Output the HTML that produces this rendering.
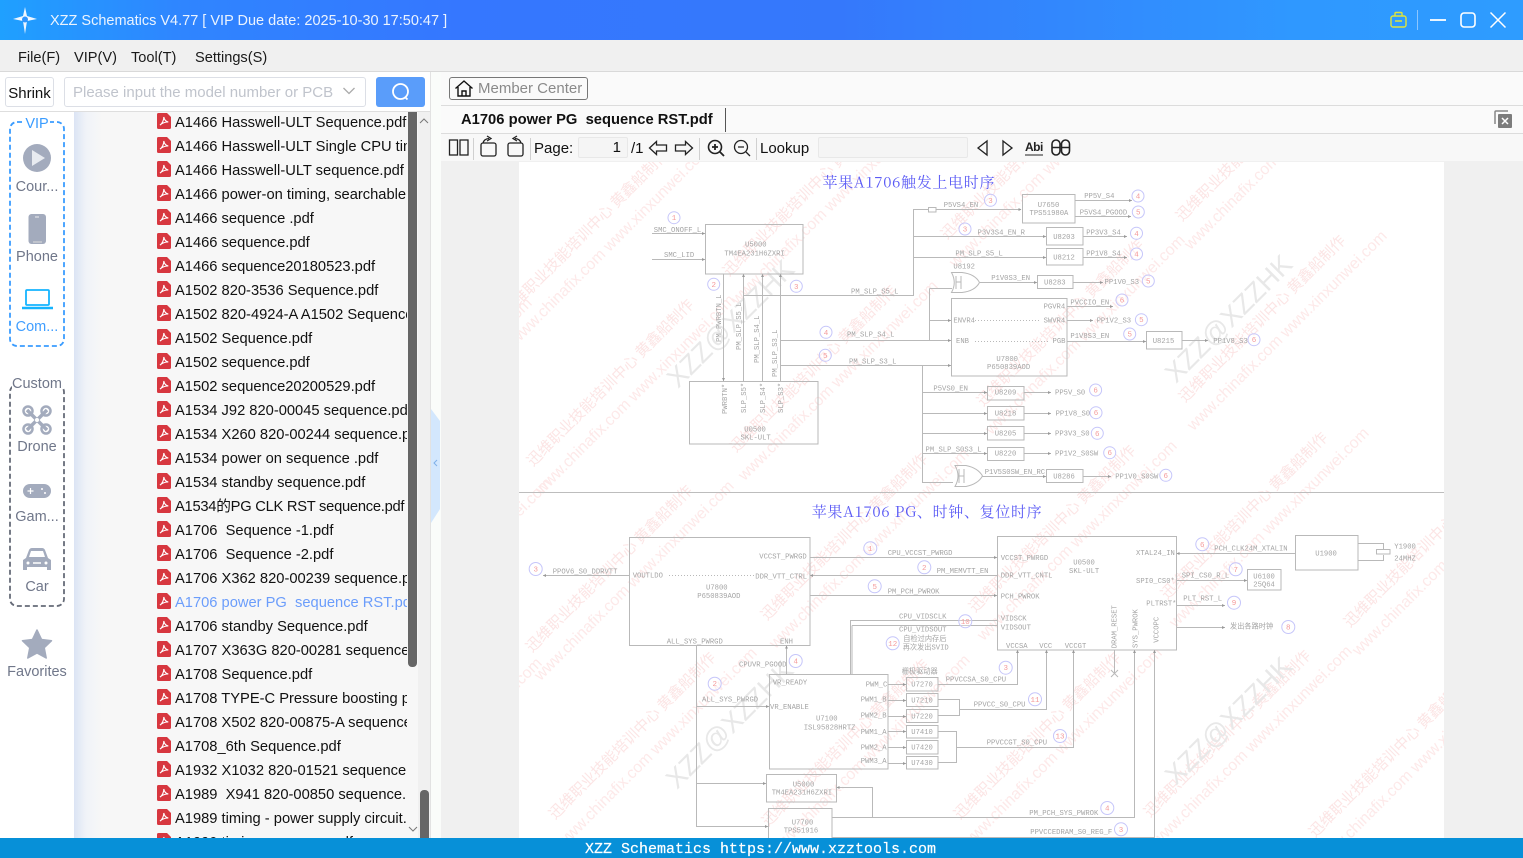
<!DOCTYPE html>
<html><head><meta charset="utf-8"><title>XZZ Schematics</title>
<style>
html,body{margin:0;padding:0;width:1523px;height:858px;overflow:hidden;background:#fff;font-family:"Liberation Sans","Noto Sans CJK SC",sans-serif}
.a{position:absolute}
#title{left:0;top:0;width:1523px;height:40px;background:linear-gradient(90deg,#1fa0ff 0,#2f85ff 12%,#3577ff 30%,#3578fb 55%,#2f98ff 85%,#2e9cff 100%)}
#menu{left:0;top:40px;width:1523px;height:31px;background:#f0f0f0;border-bottom:1px solid #d9d9d9}
#menu span{position:absolute;top:9px;font-size:14.6px;line-height:18px;color:#1a1a1a}
.b{box-sizing:border-box;background:#fff;border:1px solid #dcdfe6;border-radius:3px}
.lab{position:absolute;width:74px;left:0;text-align:center;font-size:14.5px;line-height:18px;color:#70778a}
#list{left:74px;top:112px;width:344px;height:726px;background:linear-gradient(90deg,#dbe4f4 0,#f0f3f8 12px,#f7f7f7 28px,#f7f7f7 100%);overflow:hidden}
#rows{position:absolute;left:83px;top:-3px;width:250px;overflow:hidden;height:740px}
.r{height:24px;line-height:28px;font-size:14.7px;color:#111;white-space:pre;position:relative;padding-left:18px}
.r svg{position:absolute;left:0;top:4px}
.s{position:absolute;background:#666}
.tb{position:absolute;font-size:15px;line-height:18px;color:#111}
.sep{position:absolute;width:1px;top:138px;height:22px;background:#d0d0d0}
svg text{white-space:pre}
.t{font:7.2px "Liberation Mono","Noto Sans CJK SC",monospace;fill:#a4a4a4}
.n{font:7.5px "Liberation Mono",monospace;fill:#f49a9a;text-anchor:middle}
.w1{font:15px "Noto Sans CJK SC",sans-serif;fill:#fce5e5}
.w2{font:16px "Liberation Sans",sans-serif;fill:#fde9e9}
.x{font:27px "Liberation Sans",sans-serif;fill:#e8e8e8;text-anchor:middle}
.ti{font-family:"Noto Serif CJK SC","Liberation Serif",serif;font-size:15px;fill:#5b5bf5}
.l{fill:none;stroke:#b9b9b9;stroke-width:1}
.c{fill:#fff;fill-opacity:.3;stroke:#c6c6fa;stroke-width:1}
</style></head><body>

<div class="a" id="title">
<svg class="a" style="left:12px;top:6px" width="28" height="30" viewBox="0 0 28 30"><path d="M13 1l2 9 10 3-10 2-2 13-2-13-10-2 10-3z" fill="#eef6ff"/><circle cx="13" cy="13.500" r="3" fill="#2f95ff"/><circle cx="9" cy="13.500" r="1" fill="#fff"/><circle cx="17" cy="13.500" r="1" fill="#fff"/></svg>
<div class="a" style="left:50px;top:12px;font-size:14.5px;line-height:18px;color:#eaf3ff;white-space:pre">XZZ Schematics V4.77 [ VIP Due date: 2025-10-30 17:50:47 ]</div>
<svg class="a" style="left:1385px;top:0" width="138" height="40" fill="none"><rect x="6" y="16" width="15" height="11" rx="2" stroke="#dfe53a" stroke-width="1.400"/><path d="M10 16v-2.500a1 1 0 0 1 1-1h5a1 1 0 0 1 1 1V16M10 21h7" stroke="#dfe53a" stroke-width="1.400"/><path d="M32.500 10v20" stroke="#8cc6ff"/><path d="M45 20h16" stroke="#fff" stroke-width="1.800"/><rect x="76" y="13" width="14" height="14" rx="3" stroke="#fff" stroke-width="1.600"/><path d="M105.500 12.500l15 15M120.500 12.500l-15 15" stroke="#fff" stroke-width="1.500"/></svg>
</div>

<div class="a" id="menu"><span style="left:18px">File(F)</span><span style="left:74px">VIP(V)</span><span style="left:131px">Tool(T)</span><span style="left:195px">Settings(S)</span></div>

<div class="a b" style="left:5px;top:77px;width:49px;height:30px;font-size:15px;line-height:31px;text-align:center;color:#111">Shrink</div>
<div class="a b" style="left:64px;top:77px;width:302px;height:30px;font-size:15px;line-height:30px;color:#c0c4cc;padding-left:8px">Please input the model number or PCB</div>
<svg class="a" style="left:342px;top:86px" width="14" height="10" fill="none"><path d="M1.500 2l5.500 5.500L12.500 2" stroke="#aaa" stroke-width="1.300"/></svg>
<div class="a" style="left:376px;top:77px;width:49px;height:30px;background:#5a9dfa;border-radius:3px"></div>
<svg class="a" style="left:390px;top:81px" width="22" height="22" fill="none"><circle cx="10.500" cy="10.500" r="7.500" stroke="#fff" stroke-width="1.800"/><path d="M15.500 16.500l2 2" stroke="#fff" stroke-width="1.800"/></svg>
<div class="a" style="left:0;top:111px;width:430px;height:1px;background:#dedede"></div>
<div class="a" style="left:430px;top:72px;width:11px;height:766px;background:#fafcfa;border-left:1px solid #e2e2e2;box-sizing:border-box"></div>
<div class="a" style="left:418px;top:112px;width:12px;height:726px;background:#f0f0f0"></div>

<svg class="a" style="left:0;top:112px" width="74" height="726" fill="none">
<rect x="10" y="10" width="54" height="224" rx="7" stroke="#3a9cff" stroke-width="1.800" stroke-dasharray="5 3"/>
<rect x="10" y="273" width="54" height="221" rx="7" stroke="#666b78" stroke-width="1.800" stroke-dasharray="5 3"/>
<circle cx="37" cy="46" r="14" fill="#a3abbd"/><path d="M32 38l13 8-13 8z" fill="#e8ebf0"/>
<rect x="28.500" y="102" width="17.500" height="30" rx="3" fill="#a3abbd"/><path d="M35 105h4" stroke="#eee"/><path d="M33 130h9" stroke="#ddd"/>
<rect x="26" y="178" width="23" height="15" rx="1" stroke="#14b4ff" stroke-width="1.800"/><path d="M22 196h31" stroke="#14b4ff" stroke-width="2.400"/>
<g stroke="#a3abbd"><path d="M27 298l20 20M47 298l-20 20" stroke-width="3.500"/><circle cx="28" cy="299" r="4.500" stroke-width="2.500"/><circle cx="46" cy="299" r="4.500" stroke-width="2.500"/><circle cx="28" cy="317" r="4.500" stroke-width="2.500"/><circle cx="46" cy="317" r="4.500" stroke-width="2.500"/></g><circle cx="37" cy="308" r="2" fill="#fff"/>
<rect x="23" y="372" width="28" height="14" rx="7" fill="#a3abbd"/><path d="M27.500 379h6M30.500 376v6" stroke="#fff" stroke-width="1.200"/><circle cx="42" cy="377" r="1" fill="#fff"/><circle cx="45" cy="381" r="1" fill="#fff"/>
<path d="M23 458v-10l3-2 3-8q1-2 3-2h10q2 0 3 2l3 8 3 2v10h-4v-3H27v3z" fill="#a3abbd"/><path d="M29 445l2-6h12l2 6z" fill="#fff"/><circle cx="28" cy="451" r="1.500" fill="#fff"/><circle cx="46" cy="451" r="1.500" fill="#fff"/><path d="M33 451h8" stroke="#fff" stroke-width="1.500"/>
<path d="M37 518l4.500 9.500 10 1.200-7.300 7 2 10.300-9.200-5-9.200 5 2-10.300-7.300-7 10-1.200z" fill="#a3abbd" stroke="#a3abbd" stroke-linejoin="round" stroke-width="1.500"/>
</svg>
<div class="lab" style="top:115px;left:24px;width:26px;background:#fff;color:#3a9cff">VIP</div>
<div class="lab" style="top:178px">Cour...</div>
<div class="lab" style="top:248px">Phone</div>
<div class="lab" style="top:318px;color:#409eff">Com...</div>
<div class="lab" style="top:375px;left:12px;width:50px;background:#fff">Custom</div>
<div class="lab" style="top:438px">Drone</div>
<div class="lab" style="top:508px">Gam...</div>
<div class="lab" style="top:578px">Car</div>
<div class="lab" style="top:663px">Favorites</div>

<svg width="0" height="0" style="position:absolute"><defs><symbol id="p" viewBox="0 0 14 16"><path d="M1.500 0H10l4 4v10.500a1.500 1.500 0 0 1-1.500 1.500h-11A1.500 1.500 0 0 1 0 14.500v-13A1.500 1.500 0 0 1 1.500 0z" fill="#d7373f"/><path d="M3 12c2-1 4-5 3.800-8 .5 3 2 4.500 4.500 5-2.500 0-5.500 .5-8.300 3z" fill="none" stroke="#fff" stroke-width="1.100"/></symbol></defs></svg>

<div class="a" id="list"><div id="rows">
<div class="r"><svg width="14" height="16"><use href="#p"/></svg>A1466 Hasswell-ULT Sequence.pdf</div>
<div class="r"><svg width="14" height="16"><use href="#p"/></svg>A1466 Hasswell-ULT Single CPU timing.pdf</div>
<div class="r"><svg width="14" height="16"><use href="#p"/></svg>A1466 Hasswell-ULT sequence.pdf</div>
<div class="r"><svg width="14" height="16"><use href="#p"/></svg>A1466 power-on timing, searchable.pdf</div>
<div class="r"><svg width="14" height="16"><use href="#p"/></svg>A1466 sequence .pdf</div>
<div class="r"><svg width="14" height="16"><use href="#p"/></svg>A1466 sequence.pdf</div>
<div class="r"><svg width="14" height="16"><use href="#p"/></svg>A1466 sequence20180523.pdf</div>
<div class="r"><svg width="14" height="16"><use href="#p"/></svg>A1502 820-3536 Sequence.pdf</div>
<div class="r"><svg width="14" height="16"><use href="#p"/></svg>A1502 820-4924-A A1502 Sequence.pdf</div>
<div class="r"><svg width="14" height="16"><use href="#p"/></svg>A1502 Sequence.pdf</div>
<div class="r"><svg width="14" height="16"><use href="#p"/></svg>A1502 sequence.pdf</div>
<div class="r"><svg width="14" height="16"><use href="#p"/></svg>A1502 sequence20200529.pdf</div>
<div class="r"><svg width="14" height="16"><use href="#p"/></svg>A1534 J92 820-00045 sequence.pdf</div>
<div class="r"><svg width="14" height="16"><use href="#p"/></svg>A1534 X260 820-00244 sequence.pdf</div>
<div class="r"><svg width="14" height="16"><use href="#p"/></svg>A1534 power on sequence .pdf</div>
<div class="r"><svg width="14" height="16"><use href="#p"/></svg>A1534 standby sequence.pdf</div>
<div class="r" style="letter-spacing:-.25px;height:24px;overflow:hidden"><svg width="14" height="16"><use href="#p"/></svg>A1534的PG CLK RST sequence.pdf</div>
<div class="r"><svg width="14" height="16"><use href="#p"/></svg>A1706  Sequence -1.pdf</div>
<div class="r"><svg width="14" height="16"><use href="#p"/></svg>A1706  Sequence -2.pdf</div>
<div class="r"><svg width="14" height="16"><use href="#p"/></svg>A1706 X362 820-00239 sequence.pdf</div>
<div class="r" style="color:#6b9dfb"><svg width="14" height="16"><use href="#p"/></svg>A1706 power PG  sequence RST.pdf</div>
<div class="r"><svg width="14" height="16"><use href="#p"/></svg>A1706 standby Sequence.pdf</div>
<div class="r"><svg width="14" height="16"><use href="#p"/></svg>A1707 X363G 820-00281 sequence.pdf</div>
<div class="r"><svg width="14" height="16"><use href="#p"/></svg>A1708 Sequence.pdf</div>
<div class="r"><svg width="14" height="16"><use href="#p"/></svg>A1708 TYPE-C Pressure boosting path.pdf</div>
<div class="r"><svg width="14" height="16"><use href="#p"/></svg>A1708 X502 820-00875-A sequence.pdf</div>
<div class="r"><svg width="14" height="16"><use href="#p"/></svg>A1708_6th Sequence.pdf</div>
<div class="r"><svg width="14" height="16"><use href="#p"/></svg>A1932 X1032 820-01521 sequence.pdf</div>
<div class="r"><svg width="14" height="16"><use href="#p"/></svg>A1989  X941 820-00850 sequence.pdf</div>
<div class="r"><svg width="14" height="16"><use href="#p"/></svg>A1989 timing - power supply circuit.pdf</div>
<div class="r"><svg width="14" height="16"><use href="#p"/></svg>A1990 timing sequence.pdf</div>
</div></div>
<div class="s" style="left:408px;top:112px;width:9px;height:555px;border-radius:0 0 4px 4px"></div>
<div class="s" style="left:420px;top:790px;width:9px;height:48px;border-radius:4px 4px 0 0"></div>
<svg class="a" style="left:406px;top:112px" width="26" height="726" fill="none"><path d="M14 11l4-4 4 4" stroke="#777"/><path d="M3 715l4 4 4-4" stroke="#777"/></svg>
<svg class="a" style="left:430px;top:405px" width="11" height="120"><path d="M1 4l9 12v88l-9 14z" fill="#d3e7fd"/><path d="M7 55l-3 3 3 3" fill="none" stroke="#7fb0e8"/></svg>

<div class="a" style="left:441px;top:72px;width:1082px;height:33px;background:#fafafa;border-bottom:1px solid #dcdcdc"></div>
<div class="a" style="left:441px;top:106px;width:1082px;height:27px;background:#fafafa;border-bottom:1px solid #dcdcdc"></div>
<div class="a" style="left:441px;top:134px;width:1082px;height:27px;background:#f8f8f8"></div>
<div class="a" style="left:441px;top:161px;width:1082px;height:677px;background:#f0f0f0"></div>

<div class="a" style="left:449px;top:77px;width:139px;height:23px;box-sizing:border-box;border:1px solid #777;border-radius:3px;background:#fafafa;font-size:15px;line-height:22px;color:#8a8a8a;padding-left:28px">Member Center</div>
<svg class="a" style="left:454px;top:79px" width="20" height="19" fill="none" stroke="#111" stroke-width="1.400"><path d="M1.500 9.500L10 2l8.500 7.500M4 8v9h12V8M8 17v-5h4v5"/></svg>
<div class="a" style="left:461px;top:110px;font-size:14.75px;line-height:20px;font-weight:bold;color:#111;white-space:pre">A1706 power PG  sequence RST.pdf</div>
<div class="a" style="left:725px;top:108px;width:1px;height:24px;background:#555"></div>
<svg class="a" style="left:1493px;top:109px" width="20" height="20"><path d="M2 15V3a1 1 0 0 1 1-1h12" fill="none" stroke="#888" stroke-width="1.500"/><rect x="5" y="5" width="14" height="14" rx="1" fill="#7c7c7c"/><path d="M9 9l6 6M15 9l-6 6" stroke="#fff" stroke-width="1.500"/></svg>

<svg class="a" style="left:441px;top:134px" width="640" height="27" fill="none" stroke="#222" stroke-width="1.300">
<rect x="8.500" y="6" width="8" height="15"/><rect x="19" y="6" width="8" height="15"/>
<rect x="40" y="9" width="15" height="13" rx="2"/><path d="M42 9q1-4 6-4.500M46 2l4 2.500-4 2.500"/>
<rect x="67" y="9" width="15" height="13" rx="2"/><path d="M80 9q-1-4-6-4.500M76 2l-4 2.500 4 2.500"/>
<path d="M208.500 14l7-6.500v3.500h10v6h-10v3.500z"/><path d="M251.500 14l-7-6.500v3.500h-10v6h10v3.500z"/>
<circle cx="274" cy="13" r="6.500" stroke-width="1.600"/><path d="M279 18l4 4M271 13h6M274 10v6" stroke-width="1.800"/>
<circle cx="300" cy="13" r="6.500"/><path d="M305 18l4 4M297 13h6"/>
<path d="M546 7l-9 7 9 7zM562 7l9 7-9 7z"/>
<path d="M584 21h18" stroke-width="1"/>
<rect x="611" y="6" width="8" height="15" rx="4" stroke-width="1.600"/><rect x="620.500" y="6" width="8" height="15" rx="4" stroke-width="1.600"/><path d="M611 13.500h8M620.500 13.500h8M619 10h1.500" stroke-width="1.400"/>
</svg>
<div class="a" style="left:1025px;top:141px;font-size:12px;line-height:13px;font-weight:bold;color:#222;letter-spacing:-.5px">Abi</div>
<div class="sep" style="left:473px"></div><div class="sep" style="left:530px"></div><div class="sep" style="left:699px"></div><div class="sep" style="left:756px"></div>
<div class="tb" style="left:534px;top:140px">Page:</div>
<div class="a" style="left:578px;top:137px;width:50px;height:21px;box-sizing:border-box;background:#f5f5f5;border:1px solid #e8e8e8;border-radius:2px;font-size:15px;line-height:20px;text-align:right;padding-right:6px;color:#111">1</div>
<div class="tb" style="left:631px;top:140px">/1</div>
<div class="tb" style="left:760px;top:140px">Lookup</div>
<div class="a" style="left:818px;top:137px;width:150px;height:21px;box-sizing:border-box;background:#f5f5f5;border:1px solid #e8e8e8;border-radius:2px"></div>

<svg class="a" style="left:519px;top:162px;filter:blur(.3px)" width="925" height="676" viewBox="519 162 925 676">
<rect x="519" y="162" width="925" height="676" fill="#fff"/>
<!-- watermarks -->
<g transform="translate(508,317) rotate(-45)"><text class="w1">迅维职业技能培训中心 黄鑫船制作</text><text class="w2" x="-14" y="26">www.chinafix.com www.xinxunwei.com</text></g>
<g transform="translate(729,277) rotate(-45)"><text class="w1">迅维职业技能培训中心 黄鑫船制作</text><text class="w2" x="-14" y="26">www.chinafix.com www.xinxunwei.com</text></g>
<g transform="translate(947,240) rotate(-45)"><text class="w1">迅维职业技能培训中心 黄鑫船制作</text><text class="w2" x="-14" y="26">www.chinafix.com www.xinxunwei.com</text></g>
<g transform="translate(1182,222) rotate(-45)"><text class="w1">迅维职业技能培训中心 黄鑫船制作</text><text class="w2" x="-14" y="26">www.chinafix.com www.xinxunwei.com</text></g>
<g transform="translate(330,470) rotate(-45)"><text class="w1">迅维职业技能培训中心 黄鑫船制作</text><text class="w2" x="-14" y="26">www.chinafix.com www.xinxunwei.com</text></g>
<g transform="translate(533,467) rotate(-45)"><text class="w1">迅维职业技能培训中心 黄鑫船制作</text><text class="w2" x="-14" y="26">www.chinafix.com www.xinxunwei.com</text></g>
<g transform="translate(736,453) rotate(-45)"><text class="w1">迅维职业技能培训中心 黄鑫船制作</text><text class="w2" x="-14" y="26">www.chinafix.com www.xinxunwei.com</text></g>
<g transform="translate(983,407) rotate(-45)"><text class="w1">迅维职业技能培训中心 黄鑫船制作</text><text class="w2" x="-14" y="26">www.chinafix.com www.xinxunwei.com</text></g>
<g transform="translate(1185,403) rotate(-45)"><text class="w1">迅维职业技能培训中心 黄鑫船制作</text><text class="w2" x="-14" y="26">www.chinafix.com www.xinxunwei.com</text></g>
<g transform="translate(350,650) rotate(-45)"><text class="w1">迅维职业技能培训中心 黄鑫船制作</text><text class="w2" x="-14" y="26">www.chinafix.com www.xinxunwei.com</text></g>
<g transform="translate(532,653) rotate(-45)"><text class="w1">迅维职业技能培训中心 黄鑫船制作</text><text class="w2" x="-14" y="26">www.chinafix.com www.xinxunwei.com</text></g>
<g transform="translate(767,621) rotate(-45)"><text class="w1">迅维职业技能培训中心 黄鑫船制作</text><text class="w2" x="-14" y="26">www.chinafix.com www.xinxunwei.com</text></g>
<g transform="translate(975,613) rotate(-45)"><text class="w1">迅维职业技能培训中心 黄鑫船制作</text><text class="w2" x="-14" y="26">www.chinafix.com www.xinxunwei.com</text></g>
<g transform="translate(1167,600) rotate(-45)"><text class="w1">迅维职业技能培训中心 黄鑫船制作</text><text class="w2" x="-14" y="26">www.chinafix.com www.xinxunwei.com</text></g>
<g transform="translate(1350,628) rotate(-45)"><text class="w1">迅维职业技能培训中心 黄鑫船制作</text><text class="w2" x="-14" y="26">www.chinafix.com www.xinxunwei.com</text></g>
<g transform="translate(340,830) rotate(-45)"><text class="w1">迅维职业技能培训中心 黄鑫船制作</text><text class="w2" x="-14" y="26">www.chinafix.com www.xinxunwei.com</text></g>
<g transform="translate(555,820) rotate(-45)"><text class="w1">迅维职业技能培训中心 黄鑫船制作</text><text class="w2" x="-14" y="26">www.chinafix.com www.xinxunwei.com</text></g>
<g transform="translate(768,827) rotate(-45)"><text class="w1">迅维职业技能培训中心 黄鑫船制作</text><text class="w2" x="-14" y="26">www.chinafix.com www.xinxunwei.com</text></g>
<g transform="translate(960,820) rotate(-45)"><text class="w1">迅维职业技能培训中心 黄鑫船制作</text><text class="w2" x="-14" y="26">www.chinafix.com www.xinxunwei.com</text></g>
<g transform="translate(1150,818) rotate(-45)"><text class="w1">迅维职业技能培训中心 黄鑫船制作</text><text class="w2" x="-14" y="26">www.chinafix.com www.xinxunwei.com</text></g>
<g transform="translate(1315,838) rotate(-45)"><text class="w1">迅维职业技能培训中心 黄鑫船制作</text><text class="w2" x="-14" y="26">www.chinafix.com www.xinxunwei.com</text></g>
<text class="x" transform="translate(737,330) rotate(-45)">XZZ@XZZHK</text>
<text class="x" transform="translate(1235,325) rotate(-45)">XZZ@XZZHK</text>
<text class="x" transform="translate(736,731) rotate(-45)">XZZ@XZZHK</text>
<text class="x" transform="translate(1235,727) rotate(-45)">XZZ@XZZHK</text>

<path d="M519 492.500H1444" stroke="#bdbdbd"/>
<text class="ti" x="822.500" y="187.500" textLength="172">苹果A1706触发上电时序</text>
<text class="ti" x="811.700" y="517" textLength="230">苹果A1706 PG、时钟、复位时序</text>

<!-- top section boxes and lines -->
<path class="l" d="M705.500 224.500H803V274H705.500zM689.500 381.500H818V444H689.500zM1022.500 194.500H1075V223H1022.500zM1046.500 227.500H1083V245H1046.500zM1046.500 248.500H1083V265H1046.500zM1037.500 275.500H1073V288.500H1037.500zM951.500 298.500H1067V376H951.500zM1146.500 331.500H1182V349H1146.500zM987.500 386.500H1024V400H987.500zM987.500 406.500H1024V420H987.500zM987.500 426.500H1024V440H987.500zM987.500 447.500H1024V460.500H987.500zM1046.500 469.500H1083V482.500H1046.500zM928.500 207.500H936V212H928.500z"/>
<path class="l" d="M652 233.500H705M652 259.500H705M723.500 274V381M743.500 274V381M762.500 274V381M780.500 274V381M743 295.500H913.500V209.500H928M936 209.500H1021M913.500 236.500H1046M913.500 257.500H1046M1075 200.500H1132M1075 216.500H1131M1083 236.500H1127M1083 257.500H1127M980 282.500H1037M1073 282.500H1103M1067 306.500H1113M1067 320.500H1093M1067 341.500H1146M1182 340.500H1208M780 340.500H951M929.500 288.500V340.500M929.500 288.500H952M929.500 320.500H951M780 365.500H951M922.500 365.500V482.500H953M922.500 392.500H987M922.500 413.500H987M922.500 433.500H987M922.500 453.500H987M1024 392.500H1051M1024 413.500H1051M1024 433.500H1051M1024 453.500H1051M982 476.500H1046M1083 476.500H1111"/>
<path class="l" d="M951.500 272.500H962Q975 274 979.500 282.500Q975 291 962 292.500H951.500Q957 282.500 951.500 272.500zM955 465.500H966Q978 468 982.500 476Q978 484 966 486.500H955Q961 476 955 465.500zM956 276v13M961 276v13M956 282h5M959 469v14M964 469v14M959 476h5"/>
<path class="l" stroke-dasharray="1 2" d="M975 320.500H1040M975 341.500H1048"/>
<path fill="#999" d="M705 233.500l-3-1.500v3zM705 259.500l-3-1.500v3zM1021.500 209.500l-3-1.500v3zM1046 236.500l-3-1.500v3zM1046 257.500l-3-1.500v3zM1132 200.500l-3-1.500v3zM1131 216.500l-3-1.500v3zM1127 236.500l-3-1.500v3zM1127 257.500l-3-1.500v3zM1037 282.500l-3-1.500v3zM1103 282.500l-3-1.500v3zM1113 306.500l-3-1.500v3zM1093 320.500l-3-1.500v3zM1146 341.500l-3-1.500v3zM1208 340.500l-3-1.500v3zM951 340.500l-3-1.500v3zM951 320.500l-3-1.500v3zM951 365.500l-3-1.500v3zM987 392.500l-3-1.500v3zM987 413.500l-3-1.500v3zM987 433.500l-3-1.500v3zM987 453.500l-3-1.500v3zM1051 392.500l-3-1.500v3zM1051 413.500l-3-1.500v3zM1051 433.500l-3-1.500v3zM1051 453.500l-3-1.500v3zM1046 476.500l-3-1.500v3zM1111 476.500l-3-1.500v3zM723.500 381l-1.500-3h3zM743.500 274l-1.500 3h3zM762.500 274l-1.500 3h3zM780.500 274l-1.500 3h3z"/>
<g class="t">
<text x="653.800" y="232">SMC_ONOFF_L</text><text x="664" y="257">SMC_LID</text><text x="745" y="246.300">U5000</text><text x="724.400" y="255.300">TM4EA231H6ZXRI</text>
<text transform="translate(721,342) rotate(-90)">PM_PWRBTN_L</text><text transform="translate(741,350) rotate(-90)">PM_SLP_S5_L</text><text transform="translate(759,363) rotate(-90)">PM_SLP_S4_L</text><text transform="translate(777,377) rotate(-90)">PM_SLP_S3_L</text>
<text transform="translate(727,414) rotate(-90)">PWRBTN*</text><text transform="translate(746,413) rotate(-90)">SLP_S5*</text><text transform="translate(765,413) rotate(-90)">SLP_S4*</text><text transform="translate(783,413) rotate(-90)">SLP_S3*</text>
<text x="744.300" y="431.600">U0500</text><text x="740.500" y="439.300">SKL-ULT</text>
<text x="851" y="293.300">PM_SLP_S5_L</text><text x="943.700" y="207">P5VS4_EN</text><text x="977.500" y="234.300">P3V3S4_EN_R</text><text x="955.400" y="255.300">PM_SLP_S5_L</text>
<text x="1037.700" y="207">U7650</text><text x="1029.500" y="215">TPS51980A</text><text x="1084.200" y="198">PP5V_S4</text><text x="1079.700" y="214.300">P5VS4_PGOOD</text>
<text x="1053.200" y="239">U8203</text><text x="1086.300" y="234.300">PP3V3_S4</text><text x="1053.200" y="259.600">U8212</text><text x="1086.300" y="255.300">PP1V8_S4</text>
<text x="953.400" y="268.300">U8192</text><text x="991.200" y="280">P1V0S3_EN</text><text x="1044" y="284.600">U8283</text><text x="1104.500" y="284">PP1V0_S3</text>
<text x="953.400" y="322.300">ENVR4</text><text x="956" y="343">ENB</text><text x="1043.600" y="308.700">PGVR4</text><text x="1043.600" y="322.300">SWVR4</text><text x="1052.500" y="343">PGB</text>
<text x="996.400" y="361">U7800</text><text x="987" y="369">P650839AOD</text><text x="1070.400" y="304.600">PVCCIO_EN</text><text x="1096.600" y="322.400">PP1V2_S3</text><text x="1070.400" y="338">P1V8S3_EN</text>
<text x="1152.700" y="343">U8215</text><text x="1213.300" y="343">PP1V8_S3</text><text x="847" y="336.300">PM_SLP_S4_L</text><text x="849" y="363.300">PM_SLP_S3_L</text>
<text x="933.400" y="390.300">P5VS0_EN</text><text x="994.700" y="394.600">U8209</text><text x="1055" y="394.600">PP5V_S0</text><text x="994.700" y="415.300">U8218</text><text x="1055.600" y="415.300">PP1V8_S0</text>
<text x="994.700" y="435.300">U8205</text><text x="1055" y="435.300">PP3V3_S0</text><text x="925.500" y="451.600">PM_SLP_S0S3_L</text><text x="994.700" y="455.600">U8220</text><text x="1055" y="455.600">PP1V2_S0SW</text>
<text x="984.700" y="474">P1V5S0SW_EN_RC</text><text x="1053.200" y="478.300">U8286</text><text x="1115.200" y="478.300">PP1V0_S0SW</text>
</g>

<!-- bottom section -->
<path class="l" d="M629.500 537.500H810V645.500H629.500zM997.500 536.500H1176.500V650H997.500zM769.500 674.500H888V769H769.500zM906.500 677.500H938V691H906.500zM906.500 693.500H938V706.500H906.500zM906.500 709.500H938V722.500H906.500zM906.500 725.500H938V738H906.500zM906.500 740.500H938V754H906.500zM906.500 756.500H938V769H906.500zM766.500 774.500H836.500V802H766.500zM768.500 838V808.500H832V838M1295.500 535.500H1358V570H1295.500zM1247.500 569.500H1281V590H1247.500z"/>
<path class="l" d="M629 575.500H543M810 557.500H997M810 575.500H997M810 595.500H997M850 620.500H997M852 625.500H997M850.500 620.500V674M852 625.500V674M786.500 645V674M696.500 645V826.500H768M696.500 706.500H769M696.500 783.500H766M888 684.500H906M888 700.500H906M888 716.500H906M888 731.500H906M888 747.500H906M888 763.500H906M938 684.500H1017.500V650M938 699.500H959.500V715.500H938M959.500 709.500H1046.500V650M938 731.500H956.500V762.500H938M956.500 747.500H1073.500V650M836.500 787.500H872.500V817.500M832 817.500H1134.500V650M832 837.500H1154.500V650M1114.500 650V673M1111 670l7 7M1118 670l-7 7M1176.500 553.500H1295M1358 543.500H1383.500V549M1358 560.500H1383.500V555M1376.500 549.500H1390V554H1376.500zM1176.500 580.500H1247M1176.500 605.500H1225M1176.500 627.500H1225"/>
<path class="l" stroke-dasharray="1 2" d="M669 575.500H755"/>
<path fill="#999" d="M543 575.500l3-1.500v3zM997 557.500l-3-1.500v3zM810 575.500l3-1.500v3zM997 595.500l-3-1.500v3zM786.500 645.500l-1.500 3h3zM769 706.500l-3-1.500v3zM766 783.500l-3-1.500v3zM768 826.500l-3-1.500v3zM906 684.500l-3-1.500v3zM906 700.500l-3-1.500v3zM906 716.500l-3-1.500v3zM906 731.500l-3-1.500v3zM906 747.500l-3-1.500v3zM906 763.500l-3-1.500v3zM836.500 787.500l3-1.500v3zM1017.500 650l-1.500 3h3zM1046.500 650l-1.500 3h3zM1073.500 650l-1.500 3h3zM1134.500 650l-1.500 3h3zM1154.500 650l-1.500 3h3zM1176.500 553.500l3-1.500v3zM1247 580.500l-3-1.500v3zM1225 605.500l-3-1.500v3zM1225 627.500l-3-1.500v3z"/>
<g class="t">
<text x="759.300" y="558.300">VCCST_PWRGD</text><text x="755.300" y="578.300">DDR_VTT_CTRL</text><text x="632.700" y="577.300">VOUTLDO</text><text x="706" y="589.600">U7800</text><text x="697.300" y="598">P650839AOD</text><text x="666.700" y="643.300">ALL_SYS_PWRGD</text><text x="780" y="643.300">ENH</text>
<text x="552.700" y="573.300">PPOV6_S0_DDRVTT</text><text x="887.700" y="555">CPU_VCCST_PWRGD</text><text x="936.700" y="573">PM_MEMVTT_EN</text><text x="887.700" y="593.600">PM_PCH_PWROK</text><text x="899" y="618.300">CPU_VIDSCLK</text><text x="899" y="631.600">CPU_VIDSOUT</text>
<text x="903.300" y="641">自检过内存后</text><text x="902.700" y="649.700">再次发出SVID</text><text x="739" y="666.300">CPUVR_PGOOD</text><text x="772.700" y="684.300">VR_READY</text><text x="770" y="709">VR_ENABLE</text><text x="816" y="720.600">U7100</text><text x="803.700" y="729.300">ISL95828HRTZ</text>
<text x="865.700" y="686.300">PWM_C</text><text x="860.700" y="701.600">PWM1_B</text><text x="860.700" y="717.600">PWM2_B</text><text x="860.700" y="734">PWM1_A</text><text x="860.700" y="749.600">PWM2_A</text><text x="860.700" y="763">PWM3_A</text>
<text x="911.300" y="686.500">U7270</text><text x="911.300" y="702.300">U7210</text><text x="911.300" y="718.300">U7220</text><text x="911.300" y="734">U7410</text><text x="911.300" y="749.600">U7420</text><text x="911.300" y="765">U7430</text>
<text x="901.700" y="673.700">栅极驱动器</text><text x="945.700" y="681.300">PPVCCSA_S0_CPU</text><text x="973.700" y="706.300">PPVCC_S0_CPU</text><text x="986.700" y="744.600">PPVCCGT_S0_CPU</text><text x="702" y="701.600">ALL_SYS_PWRGD</text>
<text x="792.700" y="786.300">U5000</text><text x="771.700" y="794.600">TM4EA231H6ZXRI</text><text x="791.700" y="824.300">U7700</text><text x="783.700" y="832.300">TPS51916</text><text x="1029.300" y="815">PM_PCH_SYS_PWROK</text><text x="1030.300" y="834">PPVCCEDRAM_S0_REG_F</text>
<text x="1000.700" y="560">VCCST_PWRGD</text><text x="1000.700" y="577.600">DDR_VTT_CNTL</text><text x="1000.700" y="598.300">PCH_PWROK</text><text x="1000.700" y="620.300">VIDSCK</text><text x="1000.700" y="629.600">VIDSOUT</text><text x="1006" y="648">VCCSA</text><text x="1039.300" y="648">VCC</text><text x="1064.700" y="648">VCCGT</text>
<text x="1073.300" y="564.600">U0500</text><text x="1069" y="573">SKL-ULT</text><text x="1136" y="555">XTAL24_IN</text><text x="1136" y="583">SPI0_CS0*</text><text x="1146.300" y="605.300">PLTRST*</text>
<text transform="translate(1116.500,648.300) rotate(-90)">DRAM_RESET</text><text transform="translate(1137.500,648) rotate(-90)">SYS_PWROK</text><text transform="translate(1158.300,642.700) rotate(-90)">VCCOPC</text>
<text x="1214.300" y="550.600">PCH_CLK24M_XTALIN</text><text x="1315.300" y="555.300">U1900</text><text x="1394.300" y="548.300">Y1900</text><text x="1394.300" y="560.300">24MHZ</text><text x="1181.700" y="577.300">SPI_CS0_R_L</text><text x="1253.300" y="578.300">U6100</text><text x="1253.300" y="586.600">25Q64</text><text x="1183.300" y="600.600">PLT_RST_L</text><text x="1230" y="628.700">发出各路时钟</text>
</g>

<!-- circled numbers -->
<g class="c">
<circle cx="674" cy="217.700" r="6"/><circle cx="713.700" cy="284.300" r="6"/><circle cx="796.300" cy="286.300" r="6"/><circle cx="990.500" cy="200.300" r="6"/><circle cx="965" cy="229" r="6"/><circle cx="1138" cy="196" r="6"/><circle cx="1138.300" cy="212" r="6"/><circle cx="1136.500" cy="233.300" r="6"/><circle cx="1136.500" cy="254" r="6"/><circle cx="1148.300" cy="281" r="6"/><circle cx="1122" cy="300" r="6"/><circle cx="1141.400" cy="319.700" r="6"/><circle cx="1129.700" cy="334" r="6"/><circle cx="1254" cy="339.700" r="6"/><circle cx="826" cy="332.300" r="6"/><circle cx="825.300" cy="355.300" r="6"/><circle cx="1095.600" cy="390" r="6"/><circle cx="1096" cy="412.700" r="6"/><circle cx="1097.300" cy="433.300" r="6"/><circle cx="1109.700" cy="452.700" r="6"/><circle cx="1165.800" cy="475.300" r="6"/>
<circle cx="535.700" cy="569" r="6.500"/><circle cx="870.300" cy="548.300" r="6.500"/><circle cx="924.300" cy="567.300" r="6.500"/><circle cx="874.700" cy="586.300" r="6.500"/><circle cx="965.300" cy="621.300" r="6.500"/><circle cx="892.700" cy="643.300" r="6.500"/><circle cx="795.700" cy="661" r="6.500"/><circle cx="714.700" cy="683.700" r="6.500"/><circle cx="1035" cy="699.300" r="6.500"/><circle cx="1060" cy="736" r="6.500"/><circle cx="1005.700" cy="667.700" r="6.500"/><circle cx="1107.300" cy="808" r="6.500"/><circle cx="1121" cy="829.300" r="6.500"/><circle cx="1202.300" cy="544.300" r="6.500"/><circle cx="1235.700" cy="569.300" r="6.500"/><circle cx="1234" cy="602.700" r="6.500"/><circle cx="1288.300" cy="627" r="6.500"/>
</g>
<g class="n">
<text x="674" y="220">1</text><text x="713.700" y="287">2</text><text x="796.300" y="289">3</text><text x="990.500" y="203">3</text><text x="965" y="231.500">3</text><text x="1138" y="198.500">4</text><text x="1138.300" y="214.500">5</text><text x="1136.500" y="236">4</text><text x="1136.500" y="256.500">4</text><text x="1148.300" y="283.500">5</text><text x="1122" y="302.500">6</text><text x="1141.400" y="322">5</text><text x="1129.700" y="336.500">5</text><text x="1254" y="342">6</text><text x="826" y="335">4</text><text x="825.300" y="358">5</text><text x="1095.600" y="392.500">6</text><text x="1096" y="415">6</text><text x="1097.300" y="436">6</text><text x="1109.700" y="455">6</text><text x="1165.800" y="478">6</text>
<text x="535.700" y="571.500">3</text><text x="870.300" y="551">1</text><text x="924.300" y="570">2</text><text x="874.700" y="589">5</text><text x="965.300" y="624">10</text><text x="892.700" y="646">12</text><text x="795.700" y="663.500">4</text><text x="714.700" y="686">2</text><text x="1035" y="702">11</text><text x="1060" y="738.500">13</text><text x="1005.700" y="670">3</text><text x="1107.300" y="810.500">4</text><text x="1121" y="832">3</text><text x="1202.300" y="547">6</text><text x="1235.700" y="572">7</text><text x="1234" y="605">9</text><text x="1288.300" y="629.500">8</text>
</g>
</svg>

<div class="a" style="left:0;top:838px;width:1523px;height:20px;background:#0790d8"></div>
<div class="a" style="left:585px;top:841px;font:15px/17px 'Liberation Mono',monospace;color:#fff;white-space:pre;-webkit-text-stroke:.2px #fff">XZZ Schematics https://www.xzztools.com</div>
</body></html>
